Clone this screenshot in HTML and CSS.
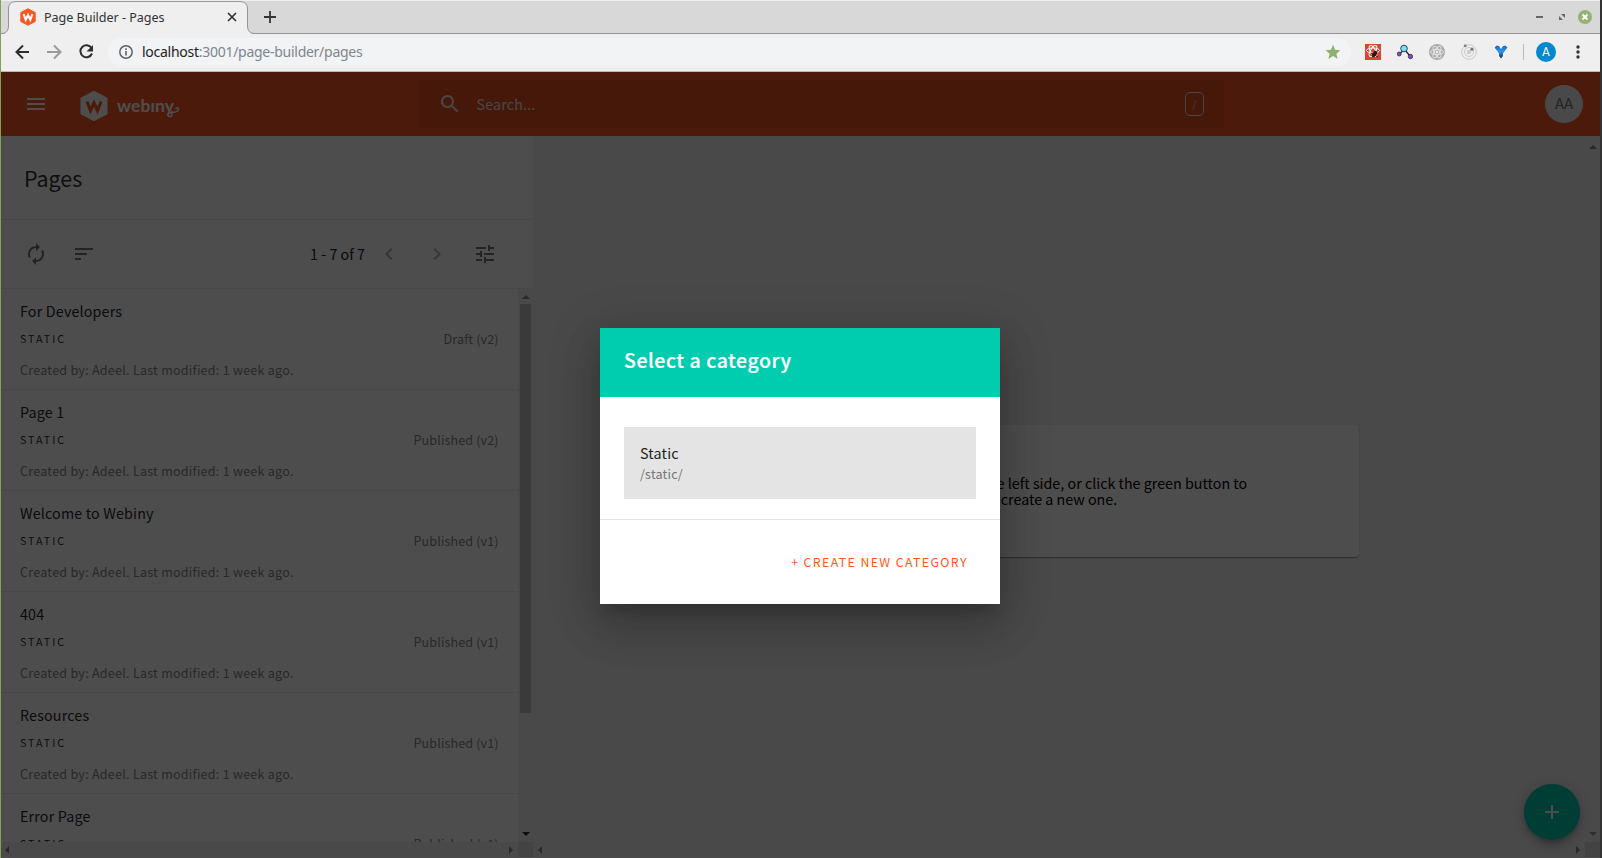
FILE: index.html
```html
<!DOCTYPE html>
<html lang="en">
<head>
<meta charset="utf-8">
<title>Page Builder - Pages</title>
<link rel="stylesheet" href="styles.css">
</head>
<body>
<div class="window">
  <div class="tabstrip">
    <svg class="tab-shape" width="262" height="33" viewBox="0 0 262 33"><path d="M0 32.500H2Q8.500 32 8.500 25V8Q8.500 .5 16 .5H240Q247.500 .5 247.500 8V25Q247.500 32.500 255 32.500H262" fill="#efefef" stroke="#949494"/><path d="M5 32h246v1H5z" fill="#efefef"/></svg>
    <div class="tab">
      <svg width="16" height="18" viewBox="0 0 16 18"><path d="M8 .8 15.200 4.500V13.500L8 17.200.8 13.500V4.500Z" fill="#fa5723" stroke="#fa5723" stroke-linejoin="round"/><path d="M3.600 6 5.700 11.800 8 7 10.300 11.800 12.400 6" fill="none" stroke="#fff" stroke-width="2"/></svg>
      <span class="tab-title">Page Builder - Pages</span>
      <svg width="10" height="10" viewBox="0 0 10 10"><path d="M1 1 9 9M9 1 1 9" stroke="#333" stroke-width="1.700"/></svg>
    </div>
    <svg class="new-tab" width="12" height="12" viewBox="0 0 12 12"><path d="M6 0V12M0 6H12" stroke="#333" stroke-width="1.800"/></svg>
    <svg class="win-buttons" width="56" height="16" viewBox="0 0 56 16"><path d="M6 8H13" stroke="#666" stroke-width="2"/><path d="M31 5h4v4zM29 7v4h4z" fill="#666"/></svg>
    <svg class="win-close" width="14" height="14" viewBox="0 0 14 14"><circle cx="7" cy="7" r="7" fill="#92b372"/><path d="M4.500 4.500 9.500 9.500M9.500 4.500 4.500 9.500" stroke="#fff" stroke-width="2"/></svg>
  </div>
  <div class="toolbar">
    <svg class="nav" width="80" height="16" viewBox="0 0 80 16"><g fill="none" stroke="#2e2e2e" stroke-width="2"><path d="M14 8H2M8 1.500 1.500 8 8 14.500"/><path d="M32 8H45M39 1.500 45.500 8 39 14.500" stroke="#9b9b9b"/><path d="M76.500 4A6 6 0 1 0 77 9.500"/></g><path d="M78 1V7.500H71.500Z" fill="#2e2e2e"/></svg>
    <div class="address">
      <svg width="14" height="14" viewBox="0 0 14 14"><circle cx="7" cy="7" r="6.200" fill="none" stroke="#5f6368" stroke-width="1.500"/><path d="M7 6V10.500M7 3.300V4.900" stroke="#5f6368" stroke-width="1.600"/></svg>
      <span class="url"><b>localhost</b>:3001/page-builder/pages</span>
      <svg width="16" height="16" viewBox="0 0 16 16"><path d="M8 .8 10.100 5.700 15.400 6.200 11.400 9.700 12.600 14.900 8 12.100 3.400 14.900 4.600 9.700.6 6.200 5.900 5.700Z" fill="#8fb170"/></svg>
    </div>
    <div class="extensions">
      <svg width="16" height="16" viewBox="0 0 16 16"><path d="M0 0H16V16H0Z" fill="#da4336"/><g fill="none" stroke="#fff" stroke-width="1"><ellipse cx="8" cy="6.500" rx="6.500" ry="2.500"/><ellipse cx="8" cy="7" rx="6" ry="2.500" transform="rotate(60 8 7)"/><ellipse cx="8" cy="7" rx="6" ry="2.500" transform="rotate(120 8 7)"/></g><ellipse cx="9.500" cy="10" rx="2" ry="3.500" fill="#301515" transform="rotate(35 9.500 10)"/><path d="M6 9 13 13M7 13 12 8" stroke="#301515"/></svg>
      <svg width="16" height="16" viewBox="0 0 16 16"><path d="M7 6 2 10M8 6 13 12" stroke="#222" stroke-width="1.300"/><circle cx="7" cy="4.500" r="3.300" fill="#83dcf5" stroke="#25465c"/><circle cx="2.200" cy="10" r="2" fill="#7950be" stroke="#2c1c49" stroke-width=".7"/><circle cx="13.500" cy="12.500" r="2.200" fill="#7950be" stroke="#2c1c49" stroke-width=".7"/></svg>
      <svg width="16" height="16" viewBox="0 0 16 16"><circle cx="8" cy="8" r="8" fill="#aaa"/><g fill="none" stroke="#e9e9e9" stroke-width=".9"><ellipse cx="8" cy="8" rx="6.500" ry="2.600"/><ellipse cx="8" cy="8" rx="6.500" ry="2.600" transform="rotate(60 8 8)"/><ellipse cx="8" cy="8" rx="6.500" ry="2.600" transform="rotate(120 8 8)"/></g><circle cx="8" cy="8" r="1.300" fill="#eee"/></svg>
      <svg width="16" height="16" viewBox="0 0 16 16"><g fill="none" stroke="#c9c9c9"><circle cx="8" cy="8" r="7.300"/><circle cx="8" cy="8" r="4.500"/></g><circle cx="8" cy="8" r="2.200" fill="#ccc"/><circle cx="4.200" cy="1.800" r="1.500" fill="#888"/><circle cx="11" cy="5.200" r="1.600" fill="#777"/></svg>
      <svg width="16" height="16" viewBox="0 0 16 16"><defs><linearGradient id="vee" x2="0" y2="1"><stop stop-color="#2166bd"/><stop offset=".5" stop-color="#2f9aea"/><stop offset="1" stop-color="#0b1d56"/></linearGradient></defs><path d="M1.500 3.500 3.500 1.500 6 2 8 5 10 2 12.500 1.500 14.500 3.500 10 9.500V12L8 14.500 6 12V9.500Z" fill="url(#vee)" stroke="#fff" stroke-width="1.500" paint-order="stroke"/></svg>
      <i class="separator"></i>
      <span class="profile">A</span>
      <svg class="kebab" width="4" height="14" viewBox="0 0 4 14"><g fill="#333"><circle cx="2" cy="2" r="1.700"/><circle cx="2" cy="7" r="1.700"/><circle cx="2" cy="12" r="1.700"/></g></svg>
    </div>
  </div>

  <div class="app">
    <header class="app-header">
      <svg class="icon menu" viewBox="0 0 24 24"><path d="M3 18h18v-2H3v2zm0-5h18v-2H3v2zm0-7v2h18V6H3z"/></svg>
      <div class="brand">
        <svg width="28" height="30" viewBox="0 0 28 30"><path d="M14 1 26.500 7.500V22.500L14 29 1.500 22.500V7.500Z" fill="#fff" stroke="#fff" stroke-width="2" stroke-linejoin="round"/><path d="M7 10.500 10.500 19.500 14 12 17.500 19.500 21 10.500" fill="none" stroke="#fa5723" stroke-width="3.200"/></svg>
        <span class="brand-name">webıny</span>
        <svg class="curl" width="14" height="12" viewBox="0 0 14 12"><path d="M5.500 5C6.500 8 6 10.700 3.800 10.700 1 10.700 1.300 7 4.300 6.700 8 6.400 12.500 6.500 12.500 3.300 12.500 1 9.800 1.300 10 3.300" fill="none" stroke="#fff" stroke-width="1.500"/></svg>
      </div>
      <div class="search">
        <svg class="icon" viewBox="0 0 24 24"><path d="M15.500 14h-.79l-.28-.27C15.410 12.590 16 11.110 16 9.500 16 5.910 13.090 3 9.500 3S3 5.910 3 9.500 5.910 16 9.500 16c1.610 0 3.090-.59 4.230-1.570l.27.28v.79l5 4.990L20.490 19l-4.990-5zm-6 0C7.010 14 5 11.990 5 9.500S7.010 5 9.500 5 14 7.010 14 9.500 11.990 14 9.500 14z"/></svg>
        <span class="search-text">Search...</span>
        <span class="key">/</span>
      </div>
      <span class="avatar">AA</span>
    </header>
    <div class="workspace">
      <aside class="sidebar">
        <h1 class="title">Pages</h1>
        <div class="actions">
          <svg class="icon" viewBox="0 0 24 24"><path d="M12 6v3l4-4-4-4v3c-4.420 0-8 3.580-8 8 0 1.570.46 3.030 1.240 4.260L6.700 14.800c-.45-.83-.7-1.790-.7-2.800 0-3.310 2.690-6 6-6zm6.760 1.740L17.300 9.200c.44.84.7 1.790.7 2.800 0 3.310-2.690 6-6 6v-3l-4 4 4 4v-3c4.420 0 8-3.580 8-8 0-1.570-.46-3.030-1.240-4.260z"/></svg>
          <svg class="icon" viewBox="0 0 24 24"><path d="M3 18h6v-2H3v2zM3 6v2h18V6H3zm0 7h12v-2H3v2z"/></svg>
          <span class="range">1 - 7 of 7</span>
          <svg class="icon faded" viewBox="0 0 24 24"><path d="M15.410 7.410 14 6l-6 6 6 6 1.410-1.410L10.830 12z"/></svg>
          <svg class="icon faded" viewBox="0 0 24 24"><path d="M10 6 8.590 7.410 13.170 12l-4.580 4.590L10 18l6-6z"/></svg>
          <svg class="icon" viewBox="0 0 24 24"><path d="M3 17v2h6v-2H3zM3 5v2h10V5H3zm10 16v-2h8v-2h-8v-2h-2v6h2zM7 9v2H3v2h4v2h2V9H7zm14 4v-2H11v2h10zm-6-4h2V7h4V5h-4V3h-2v6z"/></svg>
        </div>
        <div class="list-area">
          <div class="list">
            <div class="item"><p class="name">For Developers</p><div class="info"><span class="kind">STATIC</span><span class="status">Draft (v2)</span></div><p class="meta">Created by: Adeel. Last modified: 1 week ago.</p></div>
            <div class="item"><p class="name">Page 1</p><div class="info"><span class="kind">STATIC</span><span class="status">Published (v2)</span></div><p class="meta">Created by: Adeel. Last modified: 1 week ago.</p></div>
            <div class="item"><p class="name">Welcome to Webiny</p><div class="info"><span class="kind">STATIC</span><span class="status">Published (v1)</span></div><p class="meta">Created by: Adeel. Last modified: 1 week ago.</p></div>
            <div class="item"><p class="name">404</p><div class="info"><span class="kind">STATIC</span><span class="status">Published (v1)</span></div><p class="meta">Created by: Adeel. Last modified: 1 week ago.</p></div>
            <div class="item"><p class="name">Resources</p><div class="info"><span class="kind">STATIC</span><span class="status">Published (v1)</span></div><p class="meta">Created by: Adeel. Last modified: 1 week ago.</p></div>
            <div class="item"><p class="name">Error Page</p><div class="info"><span class="kind">STATIC</span><span class="status">Published (v1)</span></div></div>
          </div>
          <div class="vbar"><i class="up"></i><i class="thumb"></i><i class="down strong"></i></div>
        </div>
        <div class="hbar"><i class="left"></i><i class="right"></i><i class="corner"></i></div>
      </aside>
      <main class="content">
        <div class="content-row">
          <div class="canvas"><div class="notice">Select a page on the left side, or click the green button to create a new one.</div></div>
          <div class="vbar wide"><i class="up"></i><i class="down"></i></div>
        </div>
        <div class="hbar"><i class="left"></i><i class="right"></i><i class="corner"></i></div>
      </main>
    </div>
    <div class="fab"><svg class="icon" viewBox="0 0 24 24"><path d="M19 13h-6v6h-2v-6H5v-2h6V5h2v6h6v2z"/></svg></div>
    <div class="scrim">
      <div class="dialog">
        <h2 class="dialog-title">Select a category</h2>
        <div class="dialog-body"><div class="category"><p class="category-name">Static</p><p class="category-path">/static/</p></div></div>
        <div class="dialog-actions"><span class="create">+ CREATE NEW CATEGORY</span></div>
      </div>
    </div>
  </div>
</div>
</body>
</html>
```
FILE: styles.css
```css
* { box-sizing: border-box; }
body { margin: 0; overflow: hidden; background: #333; font-family: "Noto Sans CJK SC", "Noto Sans", sans-serif; font-size: 14.300px; }
p, h1, h2 { margin: 0; font-weight: 400; }
svg { display: block; flex: none; }
.window { width: 1602px; height: 858px; display: flex; flex-direction: column; border-left: 1px solid #7ca35a; border-right: 2px solid #333; }

.tabstrip { position: relative; height: 34px; flex: none; display: flex; align-items: center; background: #d8d8d8; border-top: 1px solid #efefef; border-bottom: 1px solid #949494; font-family: "Noto Sans", sans-serif; }
.tab-shape { position: absolute; left: -1px; top: 0; }
.tab { position: relative; width: 216px; margin-left: 19px; display: flex; align-items: center; gap: 8px; }
.tab-title { flex: 1; font-size: 12.600px; line-height: 18px; color: #333; letter-spacing: -.050px; white-space: nowrap; padding-top: 1px; }
.tab .tab-title + svg { margin-right: -1px; }
.new-tab { position: relative; margin-left: 28px; }
.win-buttons { margin-left: auto; width: 56px; }
.win-close { margin: 0 8px 0 -8px; }

.toolbar { height: 38px; flex: none; display: flex; align-items: center; background: #efefef; border-bottom: 1px solid #b8b8b8; padding-bottom: 1px; font-family: "Noto Sans", sans-serif; }
.nav { margin-left: 14px; }
.address { width: 1243px; height: 28px; margin-left: 13px; padding: 0 10px 0 11px; border-radius: 14px; background: #f1f3f4; display: flex; align-items: center; gap: 9px; }
.url { flex: 1; font-size: 14px; line-height: 20px; letter-spacing: -.270px; color: #80868b; }
.url b { font-weight: 400; color: #222; }
.extensions { display: flex; align-items: center; gap: 16px; margin-left: 14px; }
.separator { width: 1px; height: 16px; background: #bbb; margin-left: -2px; }
.profile { width: 20px; height: 20px; margin-left: -4px; border-radius: 50%; background: #0288d1; color: #fff; font: 12px/20px Roboto, sans-serif; text-align: center; }
.kebab { margin-left: 4px; }

.app { position: relative; flex: 1; min-height: 0; display: flex; flex-direction: column; background: #fff; }
.icon { width: 24px; height: 24px; fill: currentColor; }
.app-header { height: 64px; flex: none; display: flex; align-items: center; padding: 0 17px 0 23px; background: #fa5723; color: #fff; }
.brand { position: relative; display: flex; align-items: center; width: 128px; margin-left: 32px; gap: 9px; }
.brand svg:first-child { margin-top: 4px; }
.brand-name { font: 700 17.500px/24px Lato, sans-serif; letter-spacing: .1px; margin-top: 3px; }
.curl { position: absolute; left: 86px; top: 19px; }
.search { width: 806px; height: 48px; margin-left: 210px; padding: 0 20px; border-radius: 4px; background: #e3521f; display: flex; align-items: center; gap: 14.500px; color: #f3e6e2; }
.search-text { flex: 1; line-height: 20px; letter-spacing: .150px; }
.key { width: 19px; height: 24px; border: 1px solid #f3e6e2; border-radius: 5px; text-align: center; font-size: 10.500px; line-height: 21px; color: #dccac4; }
.avatar { margin-left: auto; width: 38px; height: 38px; border-radius: 50%; background: #f1f1f1; color: #777; text-align: center; font-size: 15px; line-height: 36px; }

.workspace { flex: 1; min-height: 0; display: flex; padding-bottom: 1px; }
.sidebar { width: 532px; display: flex; flex-direction: column; }
.title { height: 84px; flex: none; border-bottom: 1px solid #eaeaea; padding: 26px 23px 0; font-size: 21.400px; line-height: 32px; color: #333; }
.actions { height: 69px; flex: none; border-bottom: 1px solid #eaeaea; padding: 0 36px 0 23px; display: flex; align-items: center; gap: 24px; color: #757575; }
.range { margin-left: auto; margin-right: -12px; color: #202020; line-height: 20px; }
.faded { opacity: .55; }
.list-area { flex: 1; min-height: 0; display: flex; }
.list { flex: 1; overflow: hidden; }
.item { height: 101px; padding: 12px 20px 9px 19px; border-bottom: 1px solid #eaeaea; }
.name { line-height: 20px; letter-spacing: .160px; color: #282828; }
.info { display: flex; justify-content: space-between; margin: 8px 0 11px; line-height: 20px; }
.kind { font-size: 10.700px; letter-spacing: 1.980px; color: #333; }
.status, .meta { font-size: 12.500px; line-height: 20px; letter-spacing: .270px; color: #868686; }
.status { letter-spacing: .150px; margin-right: -.7px; }
.content { flex: 1; display: flex; flex-direction: column; background: #f2f2f2; }
.content-row { flex: 1; display: flex; }
.canvas { flex: 1; display: flex; align-items: center; justify-content: center; }
.notice { width: 600px; padding: 50px 100px; margin-top: 4px; border-radius: 4px; background: #fff; box-shadow: 0 2px 1px -1px #0003, 0 1px 1px #00000024, 0 1px 3px #0000001f; text-align: center; line-height: 16px; color: #000; }
.vbar { width: 15px; display: flex; flex-direction: column; align-items: center; justify-content: space-between; padding: 6px 0; background: #f1f1f1; }
.vbar.wide { padding: 9px 0 6px; }
.up, .down, .left, .right { width: 0; height: 0; border: 4px solid transparent; }
.up { border-top: 0; border-bottom-color: #888; }
.down { border-bottom: 0; border-top-color: #999; }
.down.strong { border-top-color: #333; }
.left { border-left: 0; border-right-color: #888; }
.right { border-right: 0; border-left-color: #888; }
.thumb { width: 11px; height: 409px; margin-top: 5px; margin-bottom: auto; background: #c1c1c1; }
.hbar { height: 15px; flex: none; display: flex; align-items: center; padding-left: 4px; background: #f1f1f1; }
.content .hbar { padding-left: 5px; }
.hbar .right { margin-left: auto; margin-right: 5px; }
.corner { width: 15px; height: 15px; background: #dcdcdc; }

.fab { position: absolute; left: 1523px; top: 712px; width: 56px; height: 56px; border-radius: 50%; background: #00ccb0; color: #fff; display: flex; align-items: center; justify-content: center; box-shadow: 0 3px 5px -1px #0003, 0 6px 10px #0002, 0 1px 18px #0002; }
.scrim { position: absolute; inset: 0; display: flex; align-items: center; justify-content: center; background: rgba(0, 0, 0, .698); padding: 2px 1px 0 0; }
.dialog { width: 400px; height: 276px; background: #fff; box-shadow: 0 11px 15px -7px #0003, 0 24px 38px 3px #00000024, 0 9px 46px 8px #0000001f; }
.dialog-title { height: 69px; padding: 16px 24px; background: #00ccb0; color: #fff; font-size: 19.500px; font-weight: 500; line-height: 32px; letter-spacing: .550px; -webkit-text-stroke: .2px #fff; }
.dialog-body { height: 123px; padding: 30px 24px 20px; border-bottom: 1px solid #e5e5e5; }
.category { height: 72px; padding: 16px; background: #e4e4e4; }
.category-name { line-height: 20px; color: #222; letter-spacing: .2px; }
.category-path { font-size: 12.500px; line-height: 22px; color: #757575; letter-spacing: .220px; }
.dialog-actions { height: 84px; display: flex; align-items: center; justify-content: flex-end; padding: 0 32px; }
.create { font-size: 12.300px; line-height: 20px; letter-spacing: 1.400px; color: #fa5723; }
```
